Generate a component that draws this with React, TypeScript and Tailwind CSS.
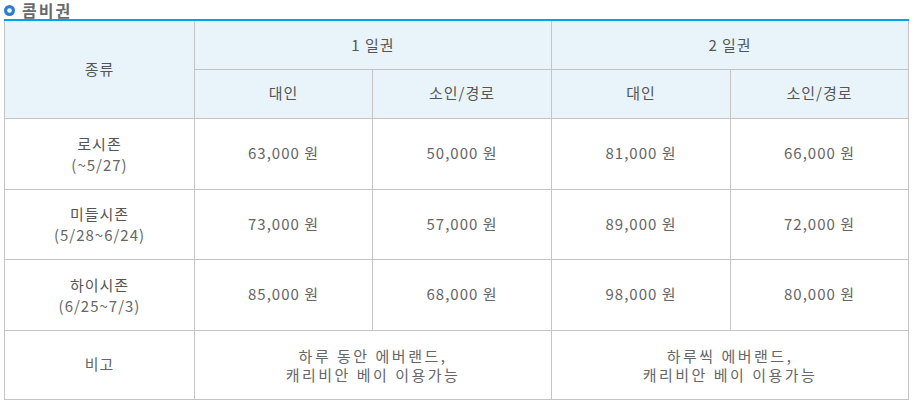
const seasons = [
  { name: "로시존", period: "(~5/27)", prices: ["63,000 원", "50,000 원", "81,000 원", "66,000 원"], h: "h-[71px]" },
  { name: "미들시존", period: "(5/28~6/24)", prices: ["73,000 원", "57,000 원", "89,000 원", "72,000 원"], h: "h-[70px]" },
  { name: "하이시존", period: "(6/25~7/3)", prices: ["85,000 원", "68,000 원", "98,000 원", "80,000 원"], h: "h-[71px]" },
];

function TitleIcon() {
  return (
    <svg width="11" height="11" viewBox="0 0 11 11" className="shrink-0">
      <circle cx="5.5" cy="5.5" r="5.5" fill="#2a7fd4" />
      <circle cx="5.5" cy="5.5" r="2.3" fill="#ffffff" />
    </svg>
  );
}

export default function App() {
  const cell = "border border-[#c4c4c4] text-center align-middle";
  const head = `${cell} bg-[#e8f4fa] text-[#555] font-normal tracking-[1px]`;
  const note = `${cell} leading-[19px] tracking-[2.5px]`;

  return (
    <div
      className="h-[404px] w-[914px] bg-white px-[4px] text-[15px] text-[#666]"
      style={{ fontFamily: '"Noto Sans CJK KR", "Noto Sans", sans-serif' }}
    >
      <div className="flex h-[19px] items-center gap-[7px] pt-[1px]">
        <TitleIcon />
        <span className="text-[16px] font-bold leading-[18px] tracking-[2px] text-[#6a6a6a]">콤비권</span>
      </div>
      <table className="w-[904px] table-fixed border-collapse border-t-2 border-t-[#00a3e8]">
        <colgroup>
          <col className="w-[190px]" />
          <col className="w-[178px]" />
          <col className="w-[179px]" />
          <col className="w-[179px]" />
          <col className="w-[178px]" />
        </colgroup>
        <thead>
          <tr className="h-[49px]">
            <th rowSpan={2} className={`${head} border-t-0`}>종류</th>
            <th colSpan={2} className={`${head} border-t-0`}>1 일권</th>
            <th colSpan={2} className={`${head} border-t-0`}>2 일권</th>
          </tr>
          <tr className="h-[49px]">
            <th className={head}>대인</th>
            <th className={head}>소인/경로</th>
            <th className={head}>대인</th>
            <th className={head}>소인/경로</th>
          </tr>
        </thead>
        <tbody>
          {seasons.map((s) => (
            <tr key={s.name} className={s.h}>
              <td className={`${cell} leading-[21px] tracking-[1px]`}>
                <div className="text-[#555]">{s.name}</div>
                <div>{s.period}</div>
              </td>
              {s.prices.map((p, i) => (
                <td key={i} className={`${cell} tracking-[1px]`}>{p}</td>
              ))}
            </tr>
          ))}
          <tr className="h-[69px]">
            <td className={`${cell} tracking-[1px]`}>비고</td>
            <td colSpan={2} className={note}>
              하루 동안 에버랜드,
              <br />
              캐리비안 베이 이용가능
            </td>
            <td colSpan={2} className={note}>
              하루씩 에버랜드,
              <br />
              캐리비안 베이 이용가능
            </td>
          </tr>
        </tbody>
      </table>
    </div>
  );
}
